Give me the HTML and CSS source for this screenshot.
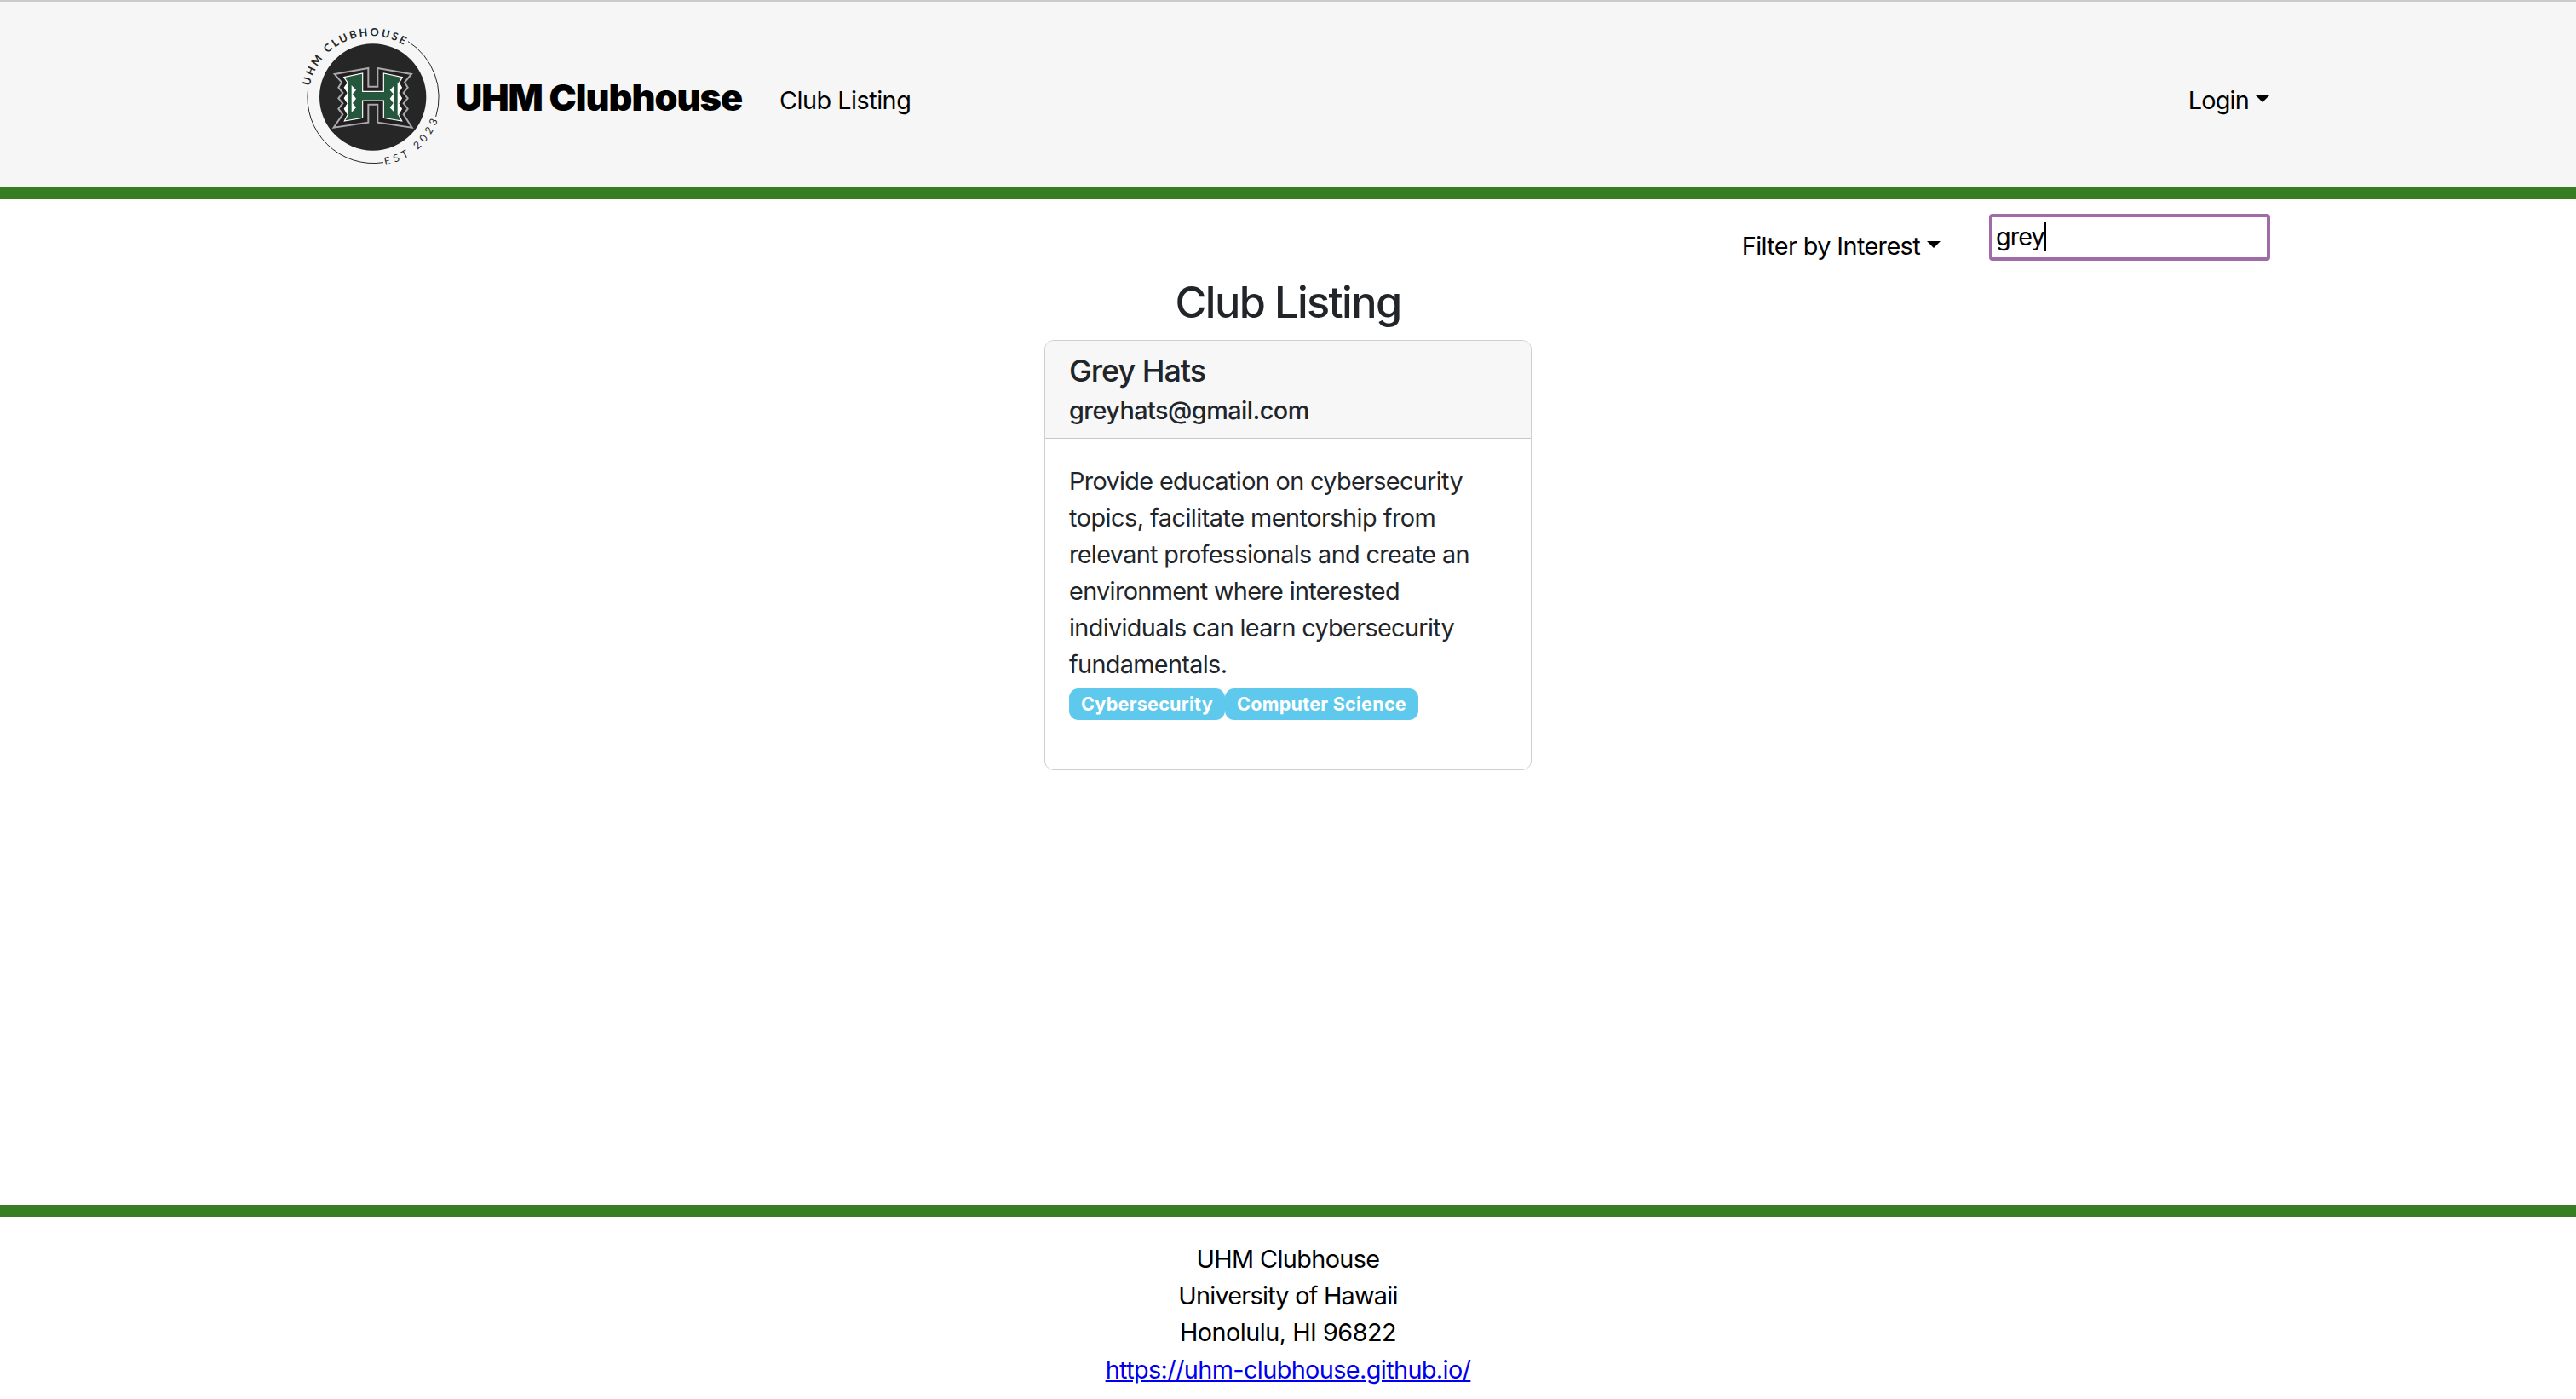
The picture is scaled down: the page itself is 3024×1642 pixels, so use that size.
FILE: index.html
```html
<!DOCTYPE html>
<html lang="en">
<head>
<meta charset="utf-8">
<title>UHM Clubhouse</title>
<link rel="stylesheet" href="styles.css">
</head>
<body>
<header class="navbar">
  <div class="container navbar-inner">
    <a class="brand">
      <svg class="logo" viewBox="30 80 525 525" aria-hidden="true">
        <defs>
          <path id="arc-top" d="M66.5 346A220.5 220.5 0 0 1 507.5 346"/>
          <path id="arc-bottom" d="M50 341A243 243 0 0 0 536 341"/>
        </defs>
        <path class="ring" d="M417 145A232 232 0 0 1 515 410M330 571A232 232 0 0 1 65 310"/>
        <circle class="disc" cx="293" cy="341" r="188"/>
        <text class="logo-name"><textPath href="#arc-top" startOffset="44" textLength="423">UHM CLUBHOUSE</textPath></text>
        <text class="logo-est"><textPath href="#arc-bottom" startOffset="425" textLength="254">EST 2023</textPath></text>
        <path class="h-outline" d="M158 260L277 239V304H310V239L429 260L405 289L416 307L401 326L416 345L401 363L416 382L401 402L431 448L310 430V367H277V430L155 448L187 402L172 382L187 363L172 345L187 326L172 307L183 289Z"/>
        <path class="h-body" d="M191 271L257 257V321H331V257L397 271L385 291L394 307L383 326L394 345L383 363L394 382L383 402L395 425L331 414V353H257V414L193 425L205 402L193 382L205 363L193 345L205 326L193 307L205 291Z"/>
        <path class="h-teeth" d="M204 291L193 307L204 326L193 345L204 363L193 382L204 402L206 405V289ZM218 299L234 316L222 330L234 346L222 362L234 378L218 395ZM384 291L395 307L384 326L395 345L384 363L395 382L384 402L380 405V289ZM369 299L353 316L365 330L353 346L365 362L353 378L369 395Z"/>
      </svg>
      <span class="brand-name">UHM Clubhouse</span>
    </a>
    <a class="nav-link">Club Listing</a>
    <a class="nav-link dropdown login">Login</a>
  </div>
</header>
<main class="container main">
  <div class="filters">
    <a class="dropdown filter">Filter by Interest</a>
    <div class="search"><span class="search-text">grey</span></div>
  </div>
  <h2 class="title">Club Listing</h2>
  <article class="card">
    <div class="card-header">
      <h5 class="club-name">Grey Hats</h5>
      <h6 class="club-email">greyhats@gmail.com</h6>
    </div>
    <div class="card-body">
      <p class="card-text">Provide education on cybersecurity<br><span class="loose">topics, facilitate mentorship from</span><br>relevant professionals and create an<br>environment where interested<br>individuals can learn cybersecurity<br>fundamentals.</p>
      <div class="badges"><span class="badge">Cybersecurity</span><span class="badge">Computer Science</span></div>
    </div>
  </article>
</main>
<footer class="footer">
  <div>UHM Clubhouse</div>
  <div class="university">University of Hawaii</div>
  <div class="city">Honolulu, HI 96822</div>
  <div><a class="site-link" href="#">https://uhm-clubhouse.github.io/</a></div>
</footer>
</body>
</html>
```
FILE: styles.css
```css
* { box-sizing: border-box; }

body {
  margin: 0;
  height: 1642px;
  display: flex;
  flex-direction: column;
  overflow: hidden;
  background: #fff;
  color: #000;
  font: 400 28.8px/43.2px Inter, "Liberation Sans", sans-serif;
  letter-spacing: -0.6px;
}

.container { width: 2376px; margin: 0 auto; padding: 0 36px; }

.navbar {
  height: 234px;
  border-top: 2px solid #ccc;
  border-bottom: 14px solid #377e22;
  background: #f6f6f6;
}
.navbar-inner { display: flex; align-items: center; height: 100%; }
.brand { display: flex; align-items: center; margin-left: -10px; }
.logo { width: 175px; height: 175px; margin-top: 6px; display: block; overflow: visible; }
.brand-name {
  width: 336px;
  margin-left: 10px;
  padding-top: 7px;
  font-size: 43.2px;
  font-weight: 900;
  letter-spacing: -1px;
  white-space: nowrap;
}
.nav-link { margin-left: 44px; padding-top: 13px; white-space: nowrap; letter-spacing: -0.5px; }
.login { margin-left: auto; letter-spacing: -0.8px; }

.dropdown { display: inline-flex; align-items: center; }
.dropdown::after {
  content: "";
  margin: 0 0 3px 8px;
  border: 8px solid transparent;
  border-top: 8.6px solid #000;
  border-bottom: 0;
}

.ring { fill: none; stroke: #262626; stroke-width: 3; }
.disc { fill: #262626; }
.logo-name { font: 700 38px Lato, sans-serif; fill: #262626; letter-spacing: 0; }
.logo-est { font: 400 37px Lato, sans-serif; fill: #262626; letter-spacing: 0; }
.h-outline { fill: #231f20; stroke: #a7a9ac; stroke-width: 6; }
.h-body { fill: #24573c; stroke: #fff; stroke-width: 3.5; }
.h-teeth { fill: #fff; }

.main { flex: 1; }
.filters {
  display: flex;
  justify-content: flex-end;
  align-items: flex-start;
  height: 90px;
  margin-right: -1px;
  padding-top: 17px;
}
.filter { margin: 16px 57px 0 0; white-space: nowrap; }
.search {
  width: 330px;
  height: 55px;
  padding: 5px 4px;
  border: 4px solid #a06ba6;
  border-radius: 4px;
  line-height: 36px;
  letter-spacing: -0.9px;
}
.search-text { display: inline-block; height: 35px; border-right: 2px solid #000; }

.title {
  margin: 1px 0 14px;
  font-size: 50.4px;
  line-height: 60px;
  font-weight: 500;
  letter-spacing: -1.6px;
  color: #212529;
  text-align: center;
}

.card {
  width: 572px;
  height: 505px;
  margin: 0 auto;
  border: 1px solid #cfcfcf;
  border-radius: 11px;
  overflow: hidden;
  color: #212529;
}
.card-header {
  height: 115px;
  padding: 14px 28px;
  background: #f7f7f7;
  border-bottom: 1px solid #c8c8c8;
}
.club-name { margin: 0 0 7px; font-size: 36px; line-height: 43px; font-weight: 500; letter-spacing: -1.05px; }
.club-email { margin: 0; font-size: 28.8px; line-height: 35px; font-weight: 500; letter-spacing: -0.52px; }
.card-body { padding: 28px; }
.card-text { margin: 0; line-height: 43.1px; letter-spacing: -0.65px; white-space: nowrap; }
.loose { letter-spacing: -0.5px; }
.badges { display: flex; margin-top: 6px; }
.badge {
  height: 37px;
  padding: 0 14px;
  border-radius: 11px;
  background: #5ec8ed;
  color: #fff;
  font-size: 21.6px;
  line-height: 37px;
  font-weight: 700;
  letter-spacing: 0.25px;
  white-space: nowrap;
}

.footer {
  height: 228px;
  padding-top: 28px;
  border-top: 14px solid #377e22;
  text-align: center;
}
.university { letter-spacing: -0.75px; }
.city { letter-spacing: -0.5px; }
.site-link { color: #00e; text-decoration: underline; }
```
